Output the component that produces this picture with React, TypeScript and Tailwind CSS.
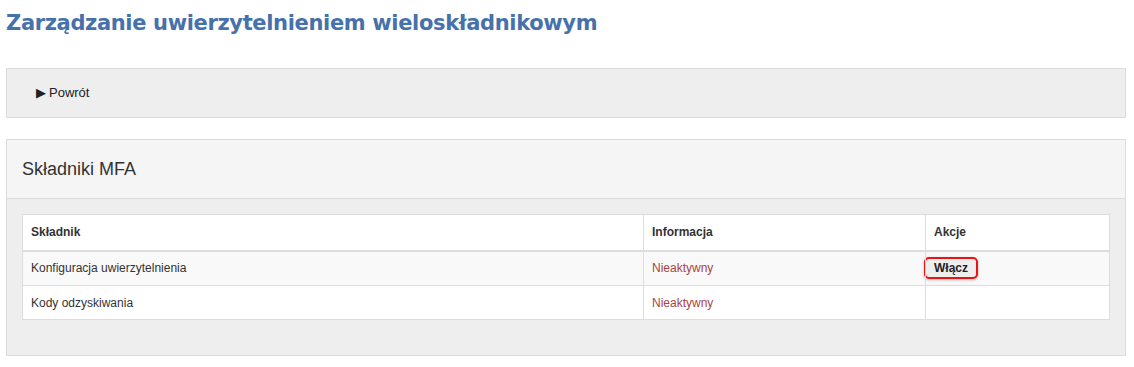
export default function App() {
  return (
    <div className="min-h-screen bg-white pl-[6px] pr-[8px] pt-[8px] font-['Liberation_Sans',Arial,sans-serif] text-[#333]">
      {/* TYTUŁ */}
      <h1 className="h-[30px] font-['DejaVu_Sans',Verdana,sans-serif] text-[21px] font-bold leading-[30px] tracking-[-0.35px] text-[#4671aa]">
        Zarządzanie uwierzytelnieniem wieloskładnikowym
      </h1>

      {/* POWRÓT */}
      <div className="mt-[30px] flex h-[50px] items-center border border-[#dcdcdc] bg-[#eeeeee] pl-[29px]">
        <a href="#" className="flex items-center gap-[3px] text-[13px] text-[#222]">
          <span className="text-[13px]">▶</span>
          Powrót
        </a>
      </div>

      {/* SKŁADNIKI MFA */}
      <div className="mt-[21px] border border-[#dcdcdc] bg-[#eeeeee]">
        <div className="flex h-[59px] items-center border-b border-[#dcdcdc] bg-[#f5f5f5] pl-[15px] text-[18px] text-[#333]">
          Składniki MFA
        </div>
        <div className="px-[15px] pb-[35px] pt-[15px]">
          <table className="w-full border-collapse border border-[#dddddd] bg-white text-[12px]">
            <thead>
              <tr className="h-[36px]">
                <th className="w-[621px] border-b-2 border-r border-[#dddddd] px-[8px] text-left font-bold">Składnik</th>
                <th className="w-[282px] border-b-2 border-r border-[#dddddd] px-[8px] text-left font-bold">Informacja</th>
                <th className="border-b-2 border-[#dddddd] px-[8px] text-left font-bold">Akcje</th>
              </tr>
            </thead>
            <tbody>
              <tr className="h-[35px] bg-[#f9f9f9]">
                <td className="border-b border-r border-[#dddddd] px-[8px]">Konfiguracja uwierzytelnienia</td>
                <td className="border-b border-r border-[#dddddd] px-[8px] text-[#a94442]">Nieaktywny</td>
                <td className="border-b border-[#dddddd] px-[8px]">
                  <button className="-ml-[10px] flex h-[22px] items-center rounded-[5px] border-2 border-[#ee1111] bg-[#eeeeee] px-[8px] text-[12px] font-bold text-[#222] shadow-[0_1px_3px_rgba(0,0,0,0.25)]">
                    Włącz
                  </button>
                </td>
              </tr>
              <tr className="h-[34px]">
                <td className="border-r border-[#dddddd] px-[8px]">Kody odzyskiwania</td>
                <td className="border-r border-[#dddddd] px-[8px] text-[#a94442]">Nieaktywny</td>
                <td className="px-[8px]"></td>
              </tr>
            </tbody>
          </table>
        </div>
      </div>
    </div>
  )
}
